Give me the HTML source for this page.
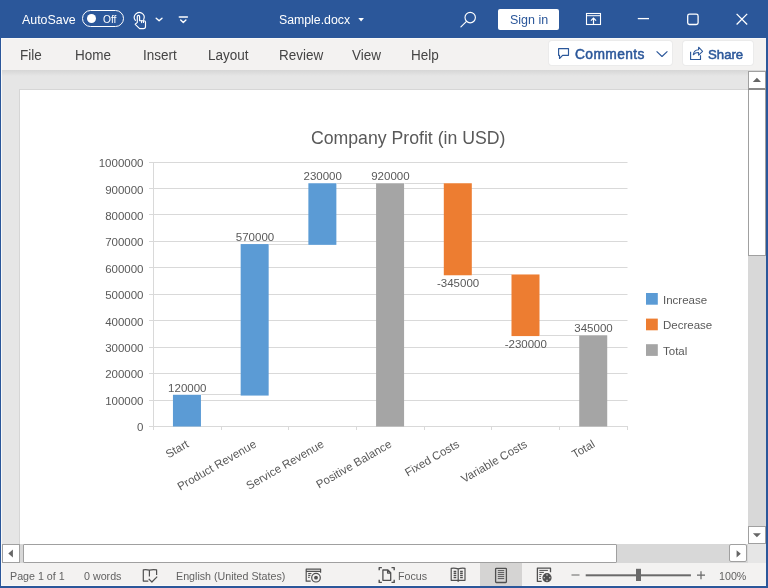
<!DOCTYPE html>
<html><head><meta charset="utf-8">
<style>
*{margin:0;padding:0;box-sizing:border-box}
html,body{width:768px;height:588px;overflow:hidden;background:#2b579a;font-family:"Liberation Sans",sans-serif}
.a{position:absolute;white-space:nowrap;will-change:transform}
#title{left:0;top:0;width:768px;height:38px;background:#2b579a}
#frame{left:1px;top:38px;width:765px;height:548px;background:#f9f9f8}
#ribbon{left:2px;top:39px;width:764px;height:31px;background:#f3f2f1}
#work{left:2px;top:70px;width:746px;height:474px;background:#e6e6e6}
#shadow{left:2px;top:70px;width:746px;height:6px;background:linear-gradient(#d6d6d6,#e6e6e6)}
#page{left:20px;top:90px;width:728px;height:454px;background:#fff;box-shadow:0 0 0 1px #d6d6d6}
#status{left:2px;top:563px;width:764px;height:22px;background:#f3f2f1}
.tab{top:46.6px;font-size:13.5px;color:#444;transform:scaleY(1.08);transform-origin:0 0}
.tt{color:#fff}
.st{top:569.5px;font-size:10.7px;color:#626262}
.bt{font-size:13.8px;color:#2b579a;-webkit-text-stroke:0.5px #2b579a;letter-spacing:0.4px}
</style></head><body>
<div id="title" class="a"></div>
<div class="a tt" style="left:22px;top:12.5px;font-size:12.4px">AutoSave</div>
<div class="a" style="left:82px;top:10px;width:41.5px;height:16.8px;border:1.4px solid #fff;border-radius:9px"></div>
<div class="a" style="left:86.7px;top:13.9px;width:9.2px;height:9.2px;background:#fff;border-radius:50%"></div>
<div class="a tt" style="left:103.3px;top:14.2px;font-size:10.2px">Off</div>
<svg class="a" style="left:0;top:0" width="768" height="38">
 <g fill="none" stroke="#fff" stroke-width="1.15" stroke-linejoin="round" stroke-linecap="round">
  <path d="M135.4 20.4 A4.9 4.9 0 1 1 143.7 19.4"/>
  <path d="M137.3 22.4 L135.2 24.3 L139.6 28.6 H143.4 Q145.5 28.6 145.5 26.5 V22.1 Q145.5 20.7 144 20.7 H139.6 V16.5 Q139.6 15.3 138.45 15.3 Q137.3 15.3 137.3 16.5 Z"/>
  <path d="M141.6 20.7 V22.6 M143.5 20.7 V22.4"/>
  <path d="M156.2 18.3 l2.9 2.5 l2.9 -2.5" stroke-width="1.4"/>
  <path d="M179.3 16.9 h8.1" stroke-width="1.5"/><path d="M180.7 19.9 l2.6 2.5 l2.6 -2.5" stroke-width="1.4"/>
  <circle cx="470.2" cy="17.6" r="5.2"/>
  <path d="M466.5 21.3 l-5.6 5.6"/>
 </g>
 <g fill="none" stroke="#fff" stroke-width="1.3">
  <rect x="586.5" y="13.5" width="14" height="11" stroke-width="1.1"/>
  <path d="M586.5 15.7 h14" stroke-width="1"/>
  <path d="M593.5 24.5 v-6.4 M590.9 20.7 l2.6 -2.6 l2.6 2.6" stroke-width="1.2"/>
  <path d="M637.8 18.6 h11.2"/>
  <rect x="687.7" y="14.1" width="10.4" height="10.4" rx="1.8"/>
  <path d="M736.6 13.9 l10.6 10.6 M747.2 13.9 l-10.6 10.6"/>
 </g>
 <path d="M358.3 18.1 h5.6 l-2.8 3.3z" fill="#fff"/>
</svg>
<div class="a tt" style="left:279px;top:13px;font-size:12.3px">Sample.docx</div>
<div class="a" style="left:498px;top:8.6px;width:61px;height:21.4px;background:#fff;border-radius:2px"></div>
<div class="a" style="left:510px;top:12.7px;font-size:12.5px;color:#2b579a">Sign in</div>

<div id="frame" class="a"></div>
<div id="ribbon" class="a"></div>
<div class="a tab" style="left:19.5px">File</div>
<div class="a tab" style="left:74.5px">Home</div>
<div class="a tab" style="left:142.5px">Insert</div>
<div class="a tab" style="left:207.5px">Layout</div>
<div class="a tab" style="left:278.5px">Review</div>
<div class="a tab" style="left:351.5px">View</div>
<div class="a tab" style="left:410.5px">Help</div>
<div class="a" style="left:549px;top:41px;width:123.4px;height:24px;background:#fff;border-radius:3px;box-shadow:0 0 0 1px #ebebeb"></div>
<div class="a" style="left:683px;top:41px;width:70px;height:24px;background:#fff;border-radius:3px;box-shadow:0 0 0 1px #ebebeb"></div>
<div class="a bt" style="left:575px;top:46.5px">Comments</div>
<div class="a bt" style="left:708px;top:46.5px;font-size:13.2px;letter-spacing:0">Share</div>
<svg class="a" style="left:540px;top:38px" width="228" height="32">
 <g fill="none" stroke="#2b579a" stroke-width="1.15" stroke-linejoin="round">
  <path d="M18.6 10.6 h9.9 v6.7 h-5.9 l-3.1 3.2 v-3.2 h-0.9 z"/>
  <path d="M116.6 13.3 l5.4 5.2 l5.4 -5.2"/>
  <path d="M150.6 13.8 v7.7 h9.9 v-4.3"/>
  <path d="M153.3 16.8 Q153.8 12 158.6 11.8 V9.2 L162.6 13.3 L158.6 17.2 V14.6 Q155.5 14.4 153.3 16.8 Z" stroke-width="1.05"/>
 </g>
</svg>

<div id="work" class="a"></div>
<div id="shadow" class="a"></div>
<div id="page" class="a"></div>

<svg class="a" style="left:0;top:0" width="768" height="588" font-family="Liberation Sans" fill="#595959">
 <g stroke="#d9d9d9" stroke-width="1" fill="none"><path d="M149 426.5 H627.5"/> <path d="M149 400.5 H627.5"/> <path d="M149 373.5 H627.5"/> <path d="M149 347.5 H627.5"/> <path d="M149 320.5 H627.5"/> <path d="M149 294.5 H627.5"/> <path d="M149 267.5 H627.5"/> <path d="M149 241.5 H627.5"/> <path d="M149 214.5 H627.5"/> <path d="M149 188.5 H627.5"/> <path d="M149 162.5 H627.5"/> <path d="M153.5 162 V427"/> <path d="M153.5 426 V430"/> <path d="M221.5 426 V430"/> <path d="M288.5 426 V430"/> <path d="M356.5 426 V430"/> <path d="M424.5 426 V430"/> <path d="M491.5 426 V430"/> <path d="M559.5 426 V430"/> <path d="M627.5 426 V430"/> <path d="M201.3 394.5 H241.0"/> <path d="M269.0 244.5 H308.7"/> <path d="M336.7 183.5 H376.4"/> <path d="M404.4 183.5 H444.1"/> <path d="M472.1 274.5 H511.8"/> <path d="M539.8 335.5 H579.5"/></g>
 <rect x="172.95" y="394.77" width="28" height="31.73" fill="#5b9bd5"/>
 <rect x="240.66" y="244.06" width="28" height="151.51" fill="#5b9bd5"/>
 <rect x="308.37" y="183.25" width="28" height="61.61" fill="#5b9bd5"/>
 <rect x="376.08" y="183.25" width="28" height="243.25" fill="#a5a5a5"/>
 <rect x="443.80" y="183.25" width="28" height="92.02" fill="#ed7d31"/>
 <rect x="511.50" y="274.47" width="28" height="61.61" fill="#ed7d31"/>
 <rect x="579.22" y="335.28" width="28" height="91.22" fill="#a5a5a5"/>
 <g font-size="11.5" text-anchor="end">
  <text x="143.5" y="167.4">1000000</text>
  <text x="143.5" y="193.8">900000</text>
  <text x="143.5" y="220.1">800000</text>
  <text x="143.5" y="246.4">700000</text>
  <text x="143.5" y="272.8">600000</text>
  <text x="143.5" y="299.1">500000</text>
  <text x="143.5" y="325.5">400000</text>
  <text x="143.5" y="351.9">300000</text>
  <text x="143.5" y="378.2">200000</text>
  <text x="143.5" y="404.6">100000</text>
  <text x="143.5" y="430.9">0</text>
 </g>
 <g font-size="11.5" text-anchor="middle">
  <text x="187.3" y="391.6">120000</text>
  <text x="255.0" y="240.9">570000</text>
  <text x="322.7" y="180.1">230000</text>
  <text x="390.4" y="180.1">920000</text>
  <text x="458.1" y="287.1">-345000</text>
  <text x="525.8" y="347.9">-230000</text>
  <text x="593.5" y="332.1">345000</text>
 </g>
 <g font-size="11.5" text-anchor="end">
  <text transform="translate(189.5,446.3) rotate(-30)">Start</text>
  <text transform="translate(257.2,446.3) rotate(-30)">Product Revenue</text>
  <text transform="translate(324.9,446.3) rotate(-30)">Service Revenue</text>
  <text transform="translate(392.6,446.3) rotate(-30)">Positive Balance</text>
  <text transform="translate(460.3,446.3) rotate(-30)">Fixed Costs</text>
  <text transform="translate(528.0,446.3) rotate(-30)">Variable Costs</text>
  <text transform="translate(595.7,446.3) rotate(-30)">Total</text>
 </g>
 <text x="408.2" y="144.4" font-size="17.7" text-anchor="middle">Company Profit (in USD)</text>
 <rect x="646" y="293" width="11.8" height="11.7" fill="#5b9bd5"/>
 <rect x="646" y="318.6" width="11.8" height="11.7" fill="#ed7d31"/>
 <rect x="646" y="344.2" width="11.8" height="11.7" fill="#a5a5a5"/>
 <g font-size="11.5">
  <text x="663" y="303.6">Increase</text>
  <text x="663" y="329.2">Decrease</text>
  <text x="663" y="354.8">Total</text>
 </g>
</svg>

<!-- vertical scrollbar -->
<div class="a" style="left:748px;top:70px;width:18px;height:474px;background:#d8d8d8"></div>
<div class="a" style="left:748px;top:71px;width:18px;height:19px;background:#fff;border:1px solid #a0a0a0;border-bottom:2px solid #8a8a8a"></div>
<div class="a" style="left:748px;top:90px;width:18px;height:166px;background:#fff;border:1px solid #a0a0a0;border-top:none"></div>
<div class="a" style="left:748px;top:526px;width:18px;height:18px;background:#fff;border:1px solid #a0a0a0"></div>
<!-- horizontal scrollbar -->
<div class="a" style="left:2px;top:544px;width:746px;height:19px;background:#d8d8d8"></div>
<div class="a" style="left:748px;top:544px;width:18px;height:19px;background:#e6e6e6"></div>
<div class="a" style="left:2px;top:544px;width:18px;height:19px;background:#fff;border:1px solid #a0a0a0"></div>
<div class="a" style="left:23px;top:544px;width:594px;height:19px;background:#fff;border:1px solid #a0a0a0;border-radius:1px"></div>
<div class="a" style="left:729.4px;top:544.4px;width:17.8px;height:18px;background:#fff;border:1px solid #a0a0a0;border-radius:2px"></div>
<svg class="a" style="left:0;top:0" width="768" height="588">
 <path d="M752.8 81.9 h8.2 l-4.1 -4.2z M752.9 533.2 h8 l-4 4.1z M12.9 549.6 V557.6 L8.3 553.6z M736.6 550.2 V557.4 L740.8 553.8z" fill="#666"/>
</svg>

<div id="status" class="a"></div>
<div class="a st" style="left:9.8px">Page 1 of 1</div>
<div class="a st" style="left:83.8px">0 words</div>
<div class="a st" style="left:175.5px">English (United States)</div>
<div class="a st" style="left:397.8px">Focus</div>
<div class="a st" style="left:718.5px">100%</div>
<div class="a" style="left:480.4px;top:563.3px;width:42.4px;height:22.7px;background:#d5d4d3"></div>
<svg class="a" style="left:0;top:0" width="768" height="588">
 <g fill="none" stroke="#505050" stroke-width="1.2" stroke-linejoin="round">
  <path d="M149.4 576.6 V570.1 Q146.3 569.3 143.3 569.8 V581.1 H148.3 M149.4 570.1 Q152.6 569.3 156.6 569.8 V575 M148.7 578.8 L151.9 582 L157.2 576.7"/>
  <path d="M310.7 581.2 H306.2 V569.2 H320.6 V572.7 M306.2 571.4 H320.6 M308.2 573.5 H311.4 M308.2 575.4 H310.4 M308.2 577.4 H309.6"/>
  <circle cx="316" cy="577.7" r="4.3"/>
  <path d="M379.2 570.3 V567.6 H381.9 M391.5 567.6 H394.2 V570.3 M394.2 579.7 V582.4 H391.5 M381.9 582.4 H379.2 V579.7" stroke-width="1.4"/>
  <path d="M382.9 570 H387.9 L390.7 572.8 V580.3 H382.9 Z M387.6 570 V573.1 H390.7" stroke-width="1.3"/>
  <path d="M451.2 568.3 Q454.8 567.7 458.2 568.9 Q461.6 567.7 465 568.3 V580.3 H459.2 L458.2 581.2 L457.2 580.3 H451.2 Z M458.2 568.9 V580.3"/>
  <path d="M453.6 571.5 h2.7 M453.6 573.5 h2.7 M453.6 575.6 h2.7 M453.6 577.6 h2.7 M460.1 571.5 h2.7 M460.1 573.5 h2.7 M460.1 575.6 h2.7 M460.1 577.6 h2.7" stroke-width="1.3"/>
  <rect x="495.6" y="568.3" width="10.8" height="14.2" rx="0.8" stroke-width="1.3"/>
  <path d="M497.8 570.6 h6.4 M497.8 572.6 h6.4 M497.8 574.6 h6.4 M497.8 576.6 h6.4 M497.8 578.6 h6.4" stroke-width="0.95"/>
  <path d="M541.7 581.4 H537.4 V568.1 H550.5 V572.2" stroke-width="1.3"/>
  <path d="M539.3 570.4 h8.6 M539.3 572.4 h4.6 M539.3 574.5 h2.3 M539.3 576.4 h1.6 M539.3 578.5 h1.6" stroke-width="1"/>
  <path d="M571.5 575 h8 M697 575.2 h8 M701 571.2 v8" stroke="#666"/>
 </g>
 <circle cx="316" cy="577.7" r="1.9" fill="#505050"/>
 <circle cx="547" cy="577.7" r="5.4" fill="#f3f2f1"/>
 <circle cx="547" cy="577.7" r="4.6" fill="#505050"/>
 <g fill="#b8b8b8"><rect x="546.2" y="574.3" width="1.6" height="1.4"/><rect x="546.2" y="579.7" width="1.6" height="1.4"/><rect x="543.6" y="577" width="1.4" height="1.4"/><rect x="549" y="577" width="1.4" height="1.4"/></g>
 <rect x="585.7" y="574.3" width="105.2" height="2" fill="#6a6a6a"/>
 <rect x="636" y="568.8" width="5" height="12.2" fill="#6a6a6a"/>
</svg>
</body></html>
